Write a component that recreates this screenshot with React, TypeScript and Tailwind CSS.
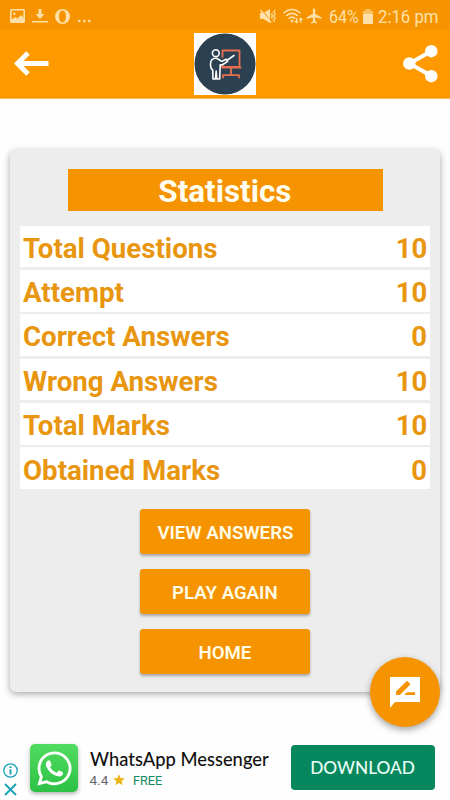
import { FaWhatsapp } from "react-icons/fa";
import { MdAirplanemodeActive, MdStar } from "react-icons/md";

const stats = [
  { label: "Total Questions", value: 10 },
  { label: "Attempt", value: 10 },
  { label: "Correct Answers", value: 0 },
  { label: "Wrong Answers", value: 10 },
  { label: "Total Marks", value: 10 },
  { label: "Obtained Marks", value: 0 },
];

const actions = ["VIEW ANSWERS", "PLAY AGAIN", "HOME"];

function StatusBar() {
  return (
    <div className="flex h-[30px] items-center justify-between bg-[#f69400] pt-[2px] pr-[12px] pl-[10px] text-[#ffe0a8]">
      <div className="flex items-center">
        <svg className="h-[14px] w-[15px]" viewBox="0 0 15 14" fill="none">
          <rect x="0.8" y="0.8" width="13.4" height="12.4" rx="0.6" stroke="currentColor" strokeWidth="1.6" />
          <circle cx="4.3" cy="4.8" r="1.2" fill="currentColor" />
          <path d="M1 11l4-3 2.4 1.6L11 6l3 3v4H1z" fill="currentColor" />
        </svg>
        <svg className="ml-[7px] h-[14px] w-[16px]" viewBox="0 0 16 14" fill="currentColor">
          <path d="M6.5 0h3v5h3L8 10 3.5 5h3zM0 12h16v1.5H0z" />
        </svg>
        <svg className="ml-[7px] h-[15px] w-[15px]" viewBox="0 0 15 15" fill="currentColor">
          <path
            fillRule="evenodd"
            d="M7.5 0a7.5 7.5 0 1 0 0 15 7.5 7.5 0 0 0 0-15zm0 1.6c2.3 0 3.4 2.6 3.4 5.9s-1.1 5.9-3.4 5.9-3.4-2.6-3.4-5.9 1.1-5.9 3.4-5.9z"
          />
        </svg>
        <svg className="ml-[8px] h-[14px] w-[13px]" viewBox="0 0 13 14" fill="currentColor">
          <circle cx="1.3" cy="12" r="1.3" />
          <circle cx="6.3" cy="12" r="1.3" />
          <circle cx="11.3" cy="12" r="1.3" />
        </svg>
      </div>
      <div className="flex items-center">
        <svg className="h-[16px] w-[16px]" viewBox="0 0 16 16" fill="none" stroke="currentColor">
          <path d="M0 5h3.5L10 1v14L3.5 11H0z" fill="currentColor" stroke="none" />
          <path d="M1.5 1.5l9.500 12" stroke="#f69400" strokeWidth="1.2" />
          <path d="M0.5 2l10.5 12.5" strokeWidth="1.3" />
          <path d="M12.5 5l-1 1.5 1 1.5-1 1.5 1 1.5M15 2l-1.2 2 1.5 2-1.5 2 1.5 2-1.5 2 .7 2" strokeWidth="1.2" />
        </svg>
        <svg className="ml-[7px] h-[16px] w-[20px]" viewBox="0 0 20 16" fill="none" stroke="currentColor" strokeWidth="1.6">
          <path d="M.7 5.3c4.7-5.1 11.9-5.1 16.6 0M3.3 8c3.3-3.5 8.1-3.5 11.4 0M5.8 10.7c2-2 4.4-2 6.4 0" />
          <circle cx="9" cy="13" r="1.4" fill="currentColor" stroke="none" />
          <path d="M13.5 10v4.5M11.8 13l1.7 1.7 1.7-1.7M17.7 15v-4.8M16 11.8l1.7-1.7 1.7 1.7" strokeWidth="1.2" />
        </svg>
        <MdAirplanemodeActive className="ml-[2px] size-[18px]" />
        <span className="ml-[6px] w-[30px] font-[Roboto,sans-serif] text-[19px] leading-none whitespace-nowrap">
          <span className="inline-block origin-left scale-x-[0.84]">64%</span>
        </span>
        <svg className="ml-[4px] h-[15px] w-[10px]" viewBox="0 0 10 15" fill="currentColor">
          <path d="M2.5 0h5v1.8h1.7c.5 0 .8.3.8.8V5H0V2.6c0-.5.3-.8.8-.8h1.7z" opacity=".6" />
          <path d="M0 5h10v9.2c0 .5-.3.8-.8.8H.8c-.5 0-.8-.3-.8-.8z" />
        </svg>
        <span className="ml-[5px] w-[60px] font-[Roboto,sans-serif] text-[19px] leading-none whitespace-nowrap">
          <span className="inline-block origin-left scale-x-[0.88]">2:16 pm</span>
        </span>
      </div>
    </div>
  );
}

function TeacherLogo() {
  return (
    <svg className="h-[62px] w-[62px] bg-white" viewBox="0 0 62 62" fill="none" strokeLinejoin="round" strokeLinecap="round">
      <circle cx="31" cy="31" r="30.5" fill="#2b4050" />
      <g stroke="#e87050" strokeWidth="1.8">
        <path d="M28.5 24V17.5h17V34h-17V32M28 34.500h18.5M37 35v7M29 44.5v-2.3h16v2.3" />
      </g>
      <path d="M29 29l10-5.5" stroke="#2b4050" strokeWidth="4" />
      <g stroke="#fff" strokeWidth="1.6">
        <circle cx="21.8" cy="20.2" r="3.4" />
        <path d="M19 46L18.7 37c-1.700-1-2.200-3.500-2.200-6 0-3.700 1.800-5.700 5.300-5.700 3.200 0 4.200 3 6.200 3l4.200-2 1.500 2-5.700 3.700-1.800-.3L25.700 46h-2.900l-.6-8-.7 8zM33.500 27l6.500-4.500" />
      </g>
    </svg>
  );
}

function Header() {
  return (
    <header className="flex h-[69px] items-center justify-between border-b border-[#f2b65c] bg-[#ff9900] pr-[12px] pl-[14px]">
      <button type="button" aria-label="Back">
        <svg className="h-[26px] w-[35px]" viewBox="0 0 35 26" fill="none" stroke="#fff" strokeWidth="5">
          <path d="M34.5 12.5H4M14 2L3.5 12.5 14 23" />
        </svg>
      </button>
      <div className="mr-[2px]">
        <TeacherLogo />
      </div>
      <button type="button" aria-label="Share">
        <svg className="h-[38px] w-[35px]" viewBox="0 0 35 38" fill="#fff">
          <path d="M28.5 6L6.5 18.500 28.5 31" fill="none" stroke="#fff" strokeWidth="4" />
          <circle cx="6.3" cy="18.5" r="6.2" />
          <circle cx="28.3" cy="6.2" r="6.2" />
          <circle cx="28.3" cy="31.2" r="6.2" />
        </svg>
      </button>
    </header>
  );
}

function StatsCard() {
  return (
    <section className="mx-[10px] mt-[51px] flex h-[542px] flex-col items-center rounded-[6px] bg-[#ededed] px-[10px] pt-[19px] font-[Roboto,sans-serif] shadow-[0_2px_7px_rgba(0,0,0,0.35)]">
      <h1 className="flex h-[42px] w-[315px] items-center justify-center bg-[#f59300] pt-[2px] text-[32px] font-bold text-[#fffdf0]">
        <span className="inline-block scale-x-[0.98]">Statistics</span>
      </h1>
      <div className="mt-[14.6px] flex w-full flex-col gap-[2.7px]">
        {stats.map((row) => (
          <div
            key={row.label}
            className="flex h-[41.7px] items-center justify-between bg-white pt-[4.5px] pr-[3px] pl-[3px] text-[28px] leading-none font-bold whitespace-nowrap text-[#e8960f]"
          >
            <span className="origin-left scale-x-[0.988]">{row.label}</span>
            <span className="origin-right scale-x-[0.98]">{row.value}</span>
          </div>
        ))}
      </div>
      <div className="mt-[20px] flex flex-col gap-[15px]">
        {actions.map((label) => (
          <button
            key={label}
            type="button"
            className="h-[45px] w-[170px] rounded-[3px] bg-[#f59300] pt-[3px] text-[19px] font-semibold whitespace-nowrap text-[#fffbe6] shadow-[0_2px_3px_rgba(0,0,0,0.3)]"
          >
            <span className="inline-block scale-x-[0.98]">{label}</span>
          </button>
        ))}
      </div>
    </section>
  );
}

function AdBanner() {
  return (
    <footer className="mt-[51px] flex h-[57px] items-start">
      <div className="mt-[20px] ml-[3px] flex flex-col gap-[4px]">
        <svg className="size-[15px]" viewBox="0 0 15 15" fill="none" stroke="#18a0b5" strokeWidth="1.3">
          <circle cx="7.5" cy="7.5" r="6.7" />
          <path d="M7.5 6.3V11.5M7.5 3.3v1.7" strokeWidth="1.9" />
        </svg>
        <svg className="size-[15px]" viewBox="0 0 15 15" stroke="#18a0b5" strokeWidth="1.8">
          <path d="M2 2L13 13M13 2L2 13" />
        </svg>
      </div>
      <div className="mt-[1px] ml-[12px] flex size-[48px] items-center justify-center rounded-[5px] bg-linear-to-b from-[#50dc60] to-[#2bc145] shadow-[0_2px_4px_rgba(0,0,0,0.3)]">
        <FaWhatsapp className="size-[39px] text-white" />
      </div>
      <div className="ml-[11.5px] flex w-[201px] flex-col font-[Lato,sans-serif] whitespace-nowrap">
        <span className="mt-[4px] origin-left scale-x-[0.965] text-[19px] leading-[24px] font-medium text-[#111]">
          WhatsApp Messenger
        </span>
        <span className="flex items-center font-[Roboto,sans-serif] text-[13.5px] leading-[18px] text-[#666]">
          <span>4.4</span>
          <MdStar className="ml-[4px] size-[14px] text-[#edb51c]" />
          <span className="ml-[7px] text-[#168a62]">
            <span className="inline-block origin-left scale-x-[0.94]">FREE</span>
          </span>
        </span>
      </div>
      <button
        type="button"
        className="mt-[2px] h-[45px] w-[144px] rounded-[4px] bg-[#06875d] font-[Lato,sans-serif] text-[18px] font-medium text-[#e9fff7]"
      >
        <span className="inline-block scale-x-[0.96]">DOWNLOAD</span>
      </button>
    </footer>
  );
}

export default function App() {
  return (
    <div className="relative h-[800px] w-[450px] overflow-hidden bg-[#fefefe]">
      <StatusBar />
      <Header />
      <StatsCard />
      <AdBanner />
      <button
        type="button"
        aria-label="Write a review"
        className="absolute top-[657px] left-[370px] flex size-[70px] items-center justify-center rounded-full bg-[#f59300] shadow-[0_3px_7px_rgba(0,0,0,0.35)]"
      >
        <svg className="h-[31px] w-[30px]" viewBox="0 0 30 31">
          <path d="M0 0h30v25H5l-5 6z" fill="#fff" />
          <path d="M6 14.500L17 3.800l3.500 3.500L10 18H6zM17 15.200H25V18H14z" fill="#f59300" />
        </svg>
      </button>
    </div>
  );
}
